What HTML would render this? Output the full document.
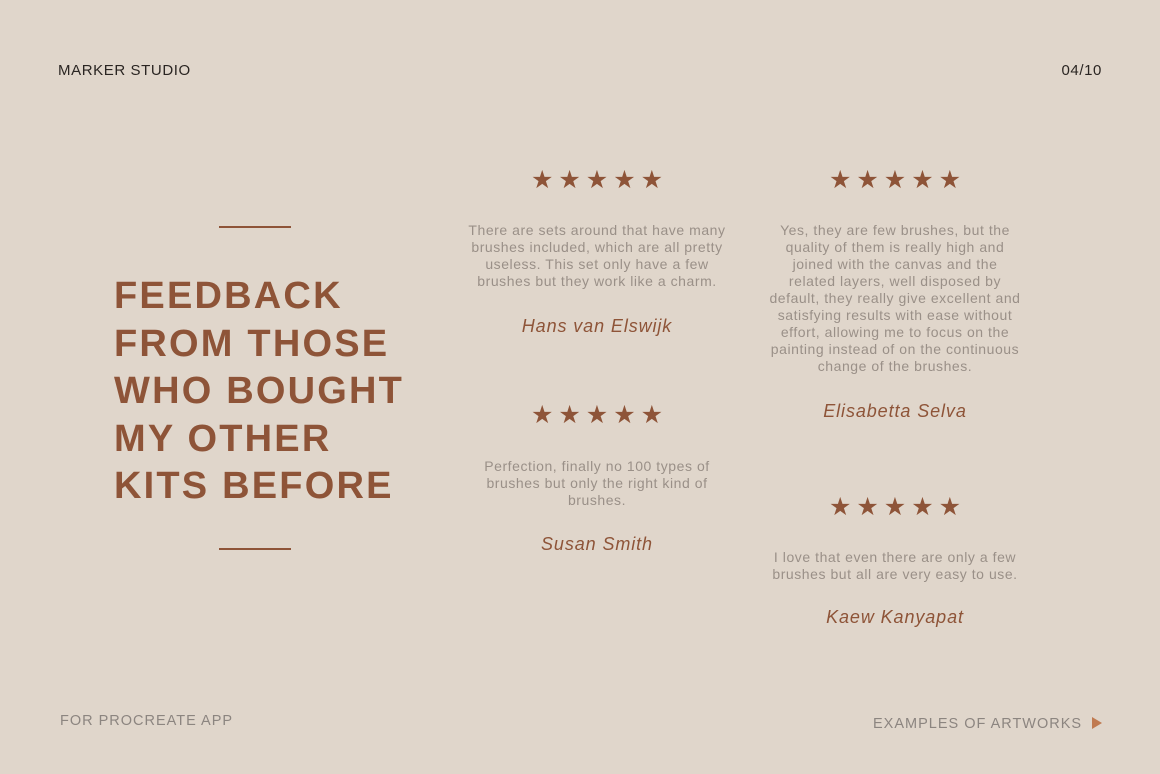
<!DOCTYPE html>
<html><head><style>
body{margin:0;width:1160px;height:774px;background:#e0d6cb;position:relative;overflow:hidden;font-family:"Liberation Sans",sans-serif}
.a{position:absolute}
.top{font-size:15px;color:#2a2522;top:62px;letter-spacing:.6px}
.h{left:114px;top:273px;font-weight:bold;font-size:38px;line-height:47.5px;color:#8e5438;letter-spacing:2.2px}
.line{width:72px;height:1.5px;background:#8e5438;left:219px}
.col{width:320px;text-align:center}
.stars{font-size:25px;color:#8e5438;letter-spacing:5px;text-indent:5px;line-height:22px}
.t{font-size:14px;line-height:17px;color:#9a9088;letter-spacing:.55px}
.n{font-size:18px;font-style:italic;color:#8e5438;letter-spacing:.9px}
.foot{font-size:14.5px;color:#8c8580;letter-spacing:1px}
</style></head><body>
<div class="a top" style="left:58px">MARKER STUDIO</div>
<div class="a top" style="right:58px">04/10</div>
<div class="a line" style="top:226px"></div>
<div class="a h">FEEDBACK<br>FROM THOSE<br>WHO BOUGHT<br>MY OTHER<br>KITS BEFORE</div>
<div class="a line" style="top:548px"></div>

<div class="a col stars" style="left:437px;top:169px">★★★★★</div>
<div class="a col t" style="left:437px;top:222px">There are sets around that have many<br>brushes included, which are all pretty<br>useless. This set only have a few<br>brushes but they work like a charm.</div>
<div class="a col n" style="left:437px;top:316px">Hans van Elswijk</div>

<div class="a col stars" style="left:437px;top:404px">★★★★★</div>
<div class="a col t" style="left:437px;top:458px">Perfection, finally no 100 types of<br>brushes but only the right kind of<br>brushes.</div>
<div class="a col n" style="left:437px;top:534px">Susan Smith</div>

<div class="a col stars" style="left:735px;top:169px">★★★★★</div>
<div class="a col t" style="left:735px;top:222px">Yes, they are few brushes, but the<br>quality of them is really high and<br>joined with the canvas and the<br>related layers, well disposed by<br>default, they really give excellent and<br>satisfying results with ease without<br>effort, allowing me to focus on the<br>painting instead of on the continuous<br>change of the brushes.</div>
<div class="a col n" style="left:735px;top:401px">Elisabetta Selva</div>

<div class="a col stars" style="left:735px;top:496px">★★★★★</div>
<div class="a col t" style="left:735px;top:549px">I love that even there are only a few<br>brushes but all are very easy to use.</div>
<div class="a col n" style="left:735px;top:607px">Kaew Kanyapat</div>

<div class="a foot" style="left:60px;top:713px">FOR PROCREATE APP</div>
<div class="a foot" style="left:873px;top:716px">EXAMPLES OF ARTWORKS</div>
<svg class="a" style="left:1092px;top:717px" width="11" height="12"><path d="M0 0L10 6L0 12Z" fill="#c07a50"/></svg>
</body></html>
